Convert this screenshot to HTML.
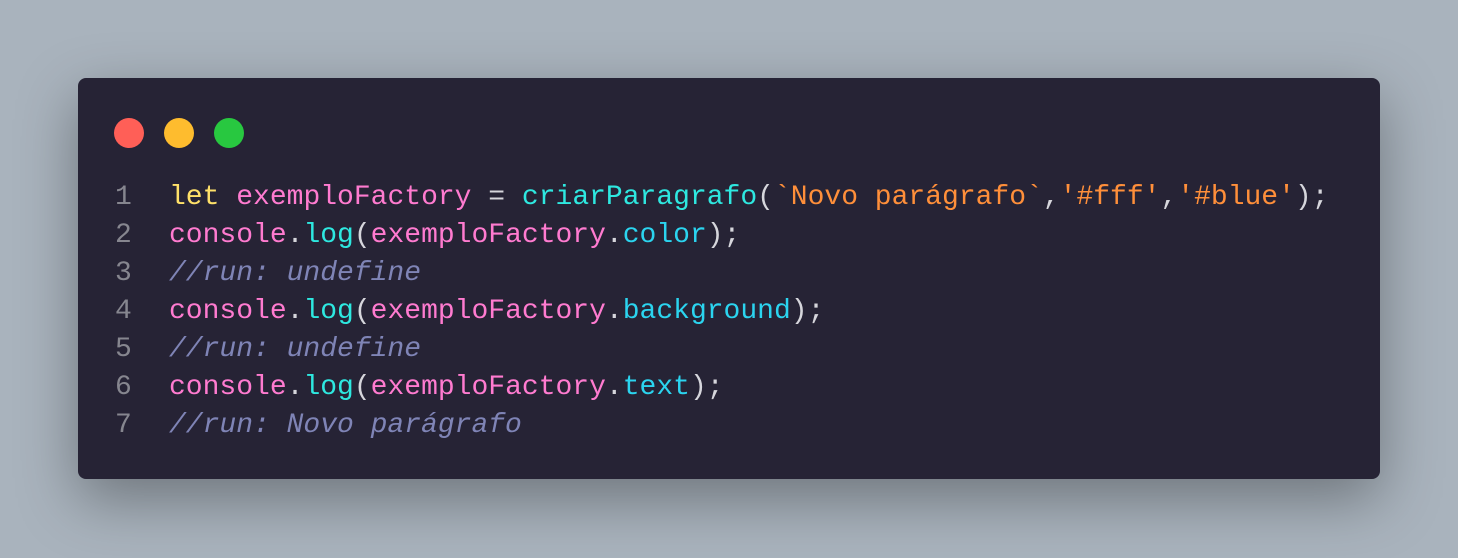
<!DOCTYPE html>
<html><head><style>
html,body{margin:0;width:1458px;height:558px;overflow:hidden;background:#a9b3bd;}
.card{position:absolute;left:78px;top:78px;width:1302px;height:401px;background:#262335;border-radius:8px;box-shadow:0 20px 60px rgba(0,0,0,.35);}
.dot{position:absolute;top:40px;width:30px;height:30px;border-radius:50%;}
pre{position:absolute;left:37px;top:101px;margin:0;font-family:"Liberation Mono",monospace;font-size:28px;line-height:38px;color:#e6e6ee;}
.n{color:#86868f;display:inline-block;width:54px;}
.k{color:#ffe169}.v{color:#ff7bd0}.f{color:#2ee8e0}.p{color:#2bd4ef}.s{color:#ff8f3a}.c{color:#7f84b6;font-style:italic}.o{color:#d6d6dc}
</style></head><body>
<div class="card">
<div class="dot" style="left:36px;background:#ff5f57"></div>
<div class="dot" style="left:86px;background:#febc2e"></div>
<div class="dot" style="left:136px;background:#28c840"></div>
<pre><span class="n">1</span><span class="k">let</span> <span class="v">exemploFactory</span> <span class="o">=</span> <span class="f">criarParagrafo</span><span class="o">(</span><span class="s">`Novo parágrafo`</span><span class="o">,</span><span class="s">'#fff'</span><span class="o">,</span><span class="s">'#blue'</span><span class="o">);</span>
<span class="n">2</span><span class="v">console</span><span class="o">.</span><span class="f">log</span><span class="o">(</span><span class="v">exemploFactory</span><span class="o">.</span><span class="p">color</span><span class="o">);</span>
<span class="n">3</span><span class="c">//run: undefine</span>
<span class="n">4</span><span class="v">console</span><span class="o">.</span><span class="f">log</span><span class="o">(</span><span class="v">exemploFactory</span><span class="o">.</span><span class="p">background</span><span class="o">);</span>
<span class="n">5</span><span class="c">//run: undefine</span>
<span class="n">6</span><span class="v">console</span><span class="o">.</span><span class="f">log</span><span class="o">(</span><span class="v">exemploFactory</span><span class="o">.</span><span class="p">text</span><span class="o">);</span>
<span class="n">7</span><span class="c">//run: Novo parágrafo</span></pre>
</div>
</body></html>
